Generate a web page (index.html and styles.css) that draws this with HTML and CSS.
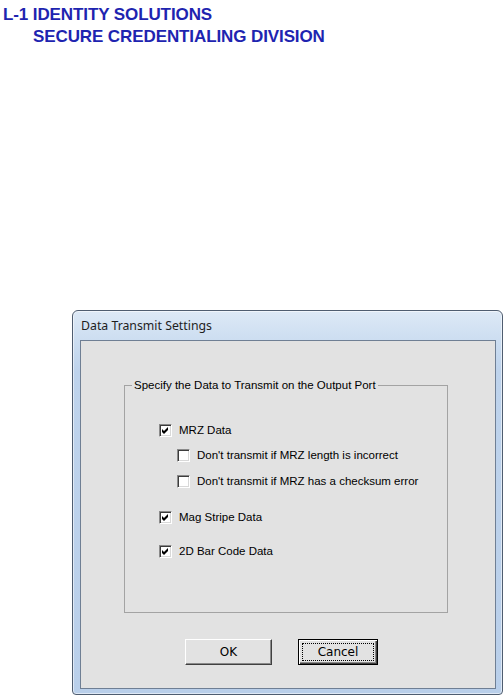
FILE: index.html
```html
<!DOCTYPE html>
<html>
<head>
<meta charset="utf-8">
<link rel="stylesheet" href="styles.css">
</head>
<body>
<div class="brand">
  <div class="brand-line">L-1 IDENTITY SOLUTIONS</div>
  <div class="brand-line brand-sub">SECURE CREDENTIALING DIVISION</div>
</div>
<div class="window">
  <div class="titlebar">Data Transmit Settings</div>
  <div class="client">
    <fieldset class="group">
      <legend class="legend">Specify the Data to Transmit on the Output Port</legend>
      <div class="row r1"><span class="cb"><svg viewBox="0 0 9 9" class="check"><polygon points="1,3 3,5 7,1 7,4 3,8 1,6"/></svg></span><span class="lbl">MRZ Data</span></div>
      <div class="row sub r2"><span class="cb"></span><span class="lbl">Don't transmit if MRZ length is incorrect</span></div>
      <div class="row sub r3"><span class="cb"></span><span class="lbl">Don't transmit if MRZ has a checksum error</span></div>
      <div class="row r4"><span class="cb"><svg viewBox="0 0 9 9" class="check"><polygon points="1,3 3,5 7,1 7,4 3,8 1,6"/></svg></span><span class="lbl">Mag Stripe Data</span></div>
      <div class="row r5"><span class="cb"><svg viewBox="0 0 9 9" class="check"><polygon points="1,3 3,5 7,1 7,4 3,8 1,6"/></svg></span><span class="lbl">2D Bar Code Data</span></div>
    </fieldset>
    <div class="buttons">
      <div class="btn btn-ok">OK</div>
      <div class="btn btn-default"><span class="focus">Cancel</span></div>
    </div>
  </div>
</div>
</body>
</html>
```
FILE: styles.css
```css
html, body {
  margin: 0;
  padding: 0;
  background: #ffffff;
}
body {
  width: 504px;
  height: 699px;
  overflow: hidden;
}
.brand {
  padding: 4px 0 0 3px;
  font-family: "Liberation Sans", Arial, sans-serif;
  font-weight: bold;
  font-size: 17px;
  line-height: 22px;
  color: #1e24b0;
  letter-spacing: -0.1px;
}
.brand-sub {
  padding-left: 30px;
}
.window {
  margin: 262px 0 0 72px;
  width: 431px;
  height: 385px;
  box-sizing: border-box;
  border: 1px solid #4f5d70;
  border-radius: 6px 6px 4px 4px;
  background: linear-gradient(to bottom, #dde9f6 0px, #cddef1 28px, #bed3ec 60px, #b9cfea 100%);
  box-shadow: inset 0 0 0 1px rgba(255,255,255,0.55);
  padding: 0 6px 5px 7px;
  display: flex;
  flex-direction: column;
}
.titlebar {
  height: 29px;
  line-height: 29px;
  padding-left: 1px;
  font-family: "Noto Sans", "Liberation Sans", sans-serif;
  font-size: 12.3px;
  color: #1e1e1e;
}
.client {
  flex: 1;
  background: #e2e2e2;
  border: 1px solid #6f7f94;
  display: flex;
  flex-direction: column;
  font-family: "Liberation Sans", Arial, sans-serif;
  font-size: 11.5px;
  color: #000;
}
.group {
  margin: 37px 0 0 43px;
  width: 324px;
  height: 235px;
  box-sizing: border-box;
  border: 1px solid #a3a3a3;
  padding: 0;
  display: flex;
  flex-direction: column;
}
.legend {
  margin-left: 7px;
  padding: 0 2px;
  line-height: 14px;
  font-size: 11.5px;
}
.row {
  display: flex;
  align-items: center;
  height: 14px;
  margin-left: 34px;
  gap: 7px;
}
.row.sub { margin-left: 52px; }
.r1 { margin-top: 31px; }
.r2 { margin-top: 11px; }
.r3 { margin-top: 12px; }
.r4 { margin-top: 22px; }
.r5 { margin-top: 20px; }
.cb {
  width: 13px;
  height: 13px;
  box-sizing: border-box;
  background: #ffffff;
  border: 1px solid;
  border-color: #8a8a8a #ffffff #ffffff #8a8a8a;
  box-shadow: inset 1px 1px 0 #3c3c3c, inset -1px -1px 0 #d8d8d8;
  display: flex;
  align-items: center;
  justify-content: center;
  flex: none;
}
.check {
  width: 9px;
  height: 9px;
  fill: #000;
}
.lbl {
  line-height: 14px;
  white-space: nowrap;
}
.buttons {
  display: flex;
  margin: 26px 0 0 104px;
  gap: 26px;
}
.btn {
  height: 26px;
  box-sizing: border-box;
  background: #e2e2e2;
  border: 1px solid;
  border-color: #ffffff #404040 #404040 #ffffff;
  box-shadow: inset -1px -1px 0 #8a8a8a;
  display: flex;
  align-items: center;
  justify-content: center;
  font-family: "DejaVu Sans", "Liberation Sans", sans-serif;
  font-size: 12px;
  color: #000;
}
.btn-ok {
  width: 87px;
}
.btn-default {
  width: 80px;
  border: 1px solid #000;
  box-shadow: inset 1px 1px 0 #ffffff, inset -1px -1px 0 #404040, inset -2px -2px 0 #8a8a8a;
  padding: 3px;
}
.focus {
  flex: 1;
  align-self: stretch;
  border: 1px dotted #000;
  display: flex;
  align-items: center;
  justify-content: center;
}
```
